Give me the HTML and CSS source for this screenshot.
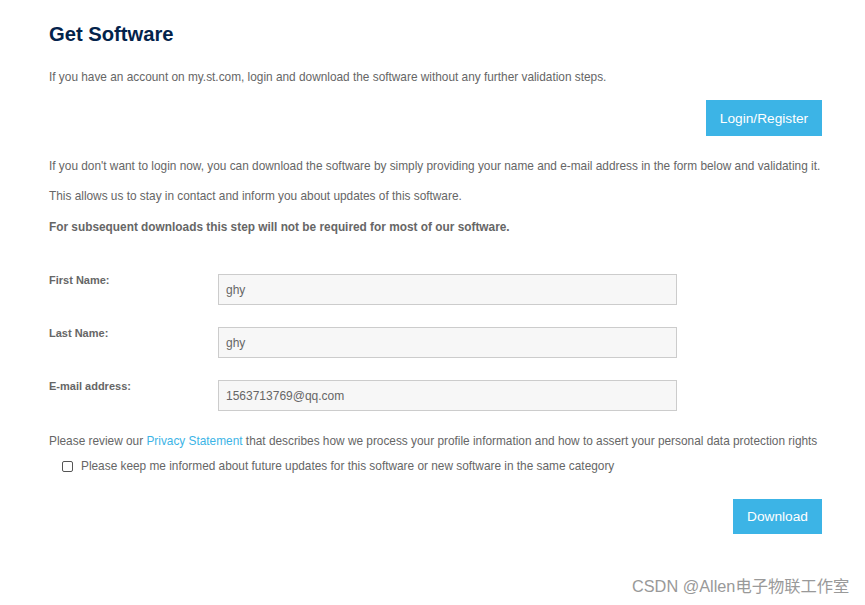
FILE: index.html
```html
<!DOCTYPE html>
<html>
<head>
<meta charset="utf-8">
<link rel="stylesheet" href="styles.css">
</head>
<body>
<div class="page">
  <h1 class="title">Get Software</h1>
  <p class="text first">If you have an account on my.st.com, login and download the software without any further validation steps.</p>
  <div class="btn-row"><button class="btn login">Login/Register</button></div>
  <p class="text p2">If you don't want to login now, you can download the software by simply providing your name and e-mail address in the form below and validating it.</p>
  <p class="text p3">This allows us to stay in contact and inform you about updates of this software.</p>
  <p class="text bold p4">For subsequent downloads this step will not be required for most of our software.</p>
  <div class="form">
    <div class="row"><label class="label">First Name:</label><input class="input" type="text" value="ghy"></div>
    <div class="row"><label class="label">Last Name:</label><input class="input" type="text" value="ghy"></div>
    <div class="row"><label class="label">E-mail address:</label><input class="input" type="text" value="1563713769@qq.com"></div>
  </div>
  <p class="text privacy">Please review our <a class="link" href="#">Privacy Statement</a> that describes how we process your profile information and how to assert your personal data protection rights</p>
  <div class="check-row"><span class="checkbox"></span><span class="text">Please keep me informed about future updates for this software or new software in the same category</span></div>
  <div class="btn-row dl"><button class="btn download">Download</button></div>
</div>
<div class="watermark">CSDN @Allen电子物联工作室</div>
</body>
</html>
```
FILE: styles.css
```css
html, body { margin: 0; padding: 0; background: #fff; }
body { width: 865px; height: 605px; position: relative; overflow: hidden; font-family: "Liberation Sans", Arial, sans-serif; }
.page { padding: 22px 43px 0 49px; }
.title { margin: 0; font-size: 20.2px; line-height: 24px; font-weight: bold; color: #03234b; }
.text { margin: 0; font-size: 11.85px; line-height: 14px; color: #666; white-space: nowrap; }
.first { margin-top: 24px; }
.btn-row { display: flex; justify-content: flex-end; margin-top: 16px; }
.btn { border: none; background: #3cb4e6; color: #fff; font-family: "Liberation Sans", Arial, sans-serif; font-size: 13.7px; padding: 0; cursor: pointer; }
.login { width: 116px; height: 36px; }
.p2 { margin-top: 23px; }
.p3 { margin-top: 16px; }
.p4 { margin-top: 17px; }
.bold { font-weight: bold; }
.form { margin-top: 40px; display: flex; flex-direction: column; gap: 22px; }
.row { display: flex; align-items: flex-start; }
.label { width: 169px; font-size: 11px; line-height: 13px; font-weight: bold; color: #666; }
.input { width: 459px; height: 31px; box-sizing: border-box; margin: 0; border: 1px solid #ccc; background: #f7f7f7; padding: 0 7px; font-family: "Liberation Sans", Arial, sans-serif; font-size: 12px; color: #666; outline: none; }
.privacy { margin-top: 23px; }
.link { color: #3cb4e6; text-decoration: none; }
.check-row { display: flex; align-items: center; margin-top: 11px; padding-left: 13px; }
.checkbox { width: 9px; height: 9px; border: 1px solid #555; border-radius: 2px; margin-right: 8px; }
.dl { margin-top: 26px; }
.download { width: 89px; height: 35px; }
.watermark { position: absolute; left: 632px; top: 577px; font-size: 16.3px; line-height: 19px; color: #999; font-family: "Liberation Sans", "Noto Sans CJK SC", sans-serif; }
```
